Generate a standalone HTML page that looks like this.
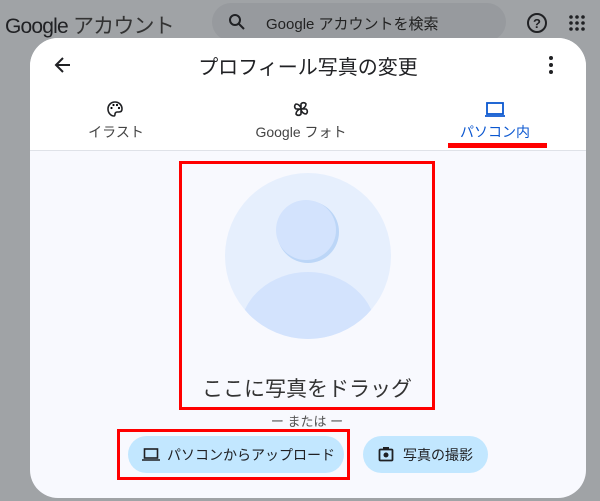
<!DOCTYPE html>
<html><head><meta charset="utf-8"><style>
*{margin:0;padding:0;box-sizing:border-box}
body{width:600px;height:501px;overflow:hidden;background:#a0a3a6;font-family:"Liberation Sans","Noto Sans CJK JP",sans-serif;position:relative}
.abs{position:absolute}
.dlg{left:30px;top:38px;width:556px;height:460px;background:#f8f9fe;border-radius:28px;overflow:hidden}
.top{position:absolute;left:0;top:0;width:556px;height:113px;background:#fff;border-bottom:1px solid #dfe2e8}
.tab{position:absolute;top:60px;text-align:center;font-size:14px;color:#444}
</style></head><body>
<div class="abs" style="left:5px;top:10px;font-size:21px;color:#202124;letter-spacing:-0.8px">Google <span style="color:#333">アカウント</span></div>
<div class="abs" style="left:212px;top:3px;width:294px;height:38px;border-radius:19px;background:#979a9e"></div>
<svg class="abs" style="left:228px;top:13px" width="18" height="18" viewBox="0 0 18 18"><circle cx="7" cy="7" r="5" fill="none" stroke="#202124" stroke-width="2"/><path d="M11 11l5 5" stroke="#202124" stroke-width="2"/></svg>
<div class="abs" style="left:266px;top:13px;font-size:15px;color:#222">Google アカウントを検索</div>
<svg class="abs" style="left:526px;top:12px" width="22" height="22" viewBox="0 0 22 22"><circle cx="11" cy="11" r="9" fill="none" stroke="#202124" stroke-width="2"/><text x="11" y="16" font-size="13" text-anchor="middle" font-weight="bold" fill="#202124" font-family="Liberation Sans">?</text></svg>
<svg class="abs" style="left:569px;top:15px" width="16" height="16" viewBox="0 0 16 16" fill="#202124"><circle cx="2" cy="2" r="1.8"/><circle cx="8" cy="2" r="1.8"/><circle cx="14" cy="2" r="1.8"/><circle cx="2" cy="8" r="1.8"/><circle cx="8" cy="8" r="1.8"/><circle cx="14" cy="8" r="1.8"/><circle cx="2" cy="14" r="1.8"/><circle cx="8" cy="14" r="1.8"/><circle cx="14" cy="14" r="1.8"/></svg>

<div class="abs dlg">
<div class="top">
<svg class="abs" style="left:24px;top:18px" width="18" height="18" viewBox="0 0 18 18"><path d="M16 9H3M9 2L2 9l7 7" fill="none" stroke="#202124" stroke-width="2"/></svg>
<div class="abs" style="left:0;width:556px;top:13px;text-align:center;font-size:20px;color:#202124">プロフィール写真の変更</div>
<svg class="abs" style="left:519px;top:18px" width="4" height="18" viewBox="0 0 4 18" fill="#202124"><circle cx="2" cy="2" r="2"/><circle cx="2" cy="9" r="2"/><circle cx="2" cy="16" r="2"/></svg>
<svg class="abs" style="left:76px;top:62px" width="18" height="18" viewBox="0 0 18 18"><path d="M9 2C5 2 2 5 2 9c0 4 3 7 6 7 1 0 1-1 1-2 0-1 1-2 2-2h2c2 0 3-1 3-3 0-4-3-7-7-7z" fill="none" stroke="#202124" stroke-width="1.6"/><circle cx="5.5" cy="8" r="1.1"/><circle cx="7.5" cy="5" r="1.1"/><circle cx="11" cy="5" r="1.1"/><circle cx="13" cy="8" r="1.1"/></svg>
<div class="tab" style="left:50px;width:72px;top:84px">イラスト</div>
<svg class="abs" style="left:262px;top:62px" width="18" height="18" viewBox="0 0 18 18" fill="none" stroke="#202124" stroke-width="1.6"><path d="M9 9V4a3 3 0 0 1 5 0c0 2-2 5-5 5zM9 9h5a3 3 0 0 1 0 5c-2 0-5-2-5-5zM9 9v5a3 3 0 0 1-5 0c0-2 2-5 5-5zM9 9H4a3 3 0 0 1 0-5c2 0 5 2 5 5z"/></svg>
<div class="tab" style="left:211px;width:120px;top:84px">Google フォト</div>
<svg class="abs" style="left:454px;top:62px" width="22" height="18" viewBox="0 0 22 18"><rect x="3" y="3" width="16" height="11" fill="none" stroke="#0b57d0" stroke-width="1.8"/><path d="M1 16h20" stroke="#0b57d0" stroke-width="1.8"/></svg>
<div class="tab" style="left:420px;width:90px;top:84px;color:#0b57d0">パソコン内</div>
<div class="abs" style="left:418px;top:105px;width:99px;height:5px;background:#f00"></div>
</div>
<svg class="abs" style="left:194px;top:134px" width="168" height="168" viewBox="0 0 168 168"><defs><clipPath id="c"><circle cx="84" cy="84" r="83"/></clipPath></defs><circle cx="84" cy="84" r="83" fill="#e6effd"/><g clip-path="url(#c)"><ellipse cx="84" cy="160" rx="68" ry="60" fill="#d3e3fd"/></g><circle cx="84" cy="60" r="31" fill="#bcd6f7"/><circle cx="82" cy="58" r="30" fill="#d3e3fd"/></svg>
<div class="abs" style="left:149px;top:123px;width:256px;height:249px;border:3px solid #f00"></div>
<div class="abs" style="left:149px;width:256px;top:335px;text-align:center;font-size:21px;color:#333">ここに写真をドラッグ</div>
<div class="abs" style="left:149px;width:256px;top:373px;text-align:center;font-size:13px;color:#555">ー または ー</div>
<div class="abs" style="left:98px;top:398px;width:216px;height:37px;border-radius:19px;background:#c2e7ff"></div>
<svg class="abs" style="left:112px;top:409px" width="18" height="15" viewBox="0 0 18 15"><rect x="2.5" y="2" width="13" height="9" fill="none" stroke="#202124" stroke-width="1.6"/><path d="M0 13h18" stroke="#202124" stroke-width="1.6"/></svg>
<div class="abs" style="left:137px;top:407px;font-size:14px;color:#202124">パソコンからアップロード</div>
<div class="abs" style="left:87px;top:391px;width:233px;height:51px;border:3px solid #f00"></div>
<div class="abs" style="left:333px;top:398px;width:125px;height:37px;border-radius:19px;background:#c2e7ff"></div>
<svg class="abs" style="left:348px;top:408px" width="16" height="16" viewBox="0 0 16 16"><rect x="1.5" y="3.5" width="13" height="11" rx="1" fill="none" stroke="#202124" stroke-width="1.8"/><rect x="5" y="1" width="6" height="3" fill="#202124"/><circle cx="8" cy="9" r="2.5" fill="#202124"/></svg>
<div class="abs" style="left:373px;top:407px;font-size:14px;color:#202124">写真の撮影</div>
</div>
</body></html>
